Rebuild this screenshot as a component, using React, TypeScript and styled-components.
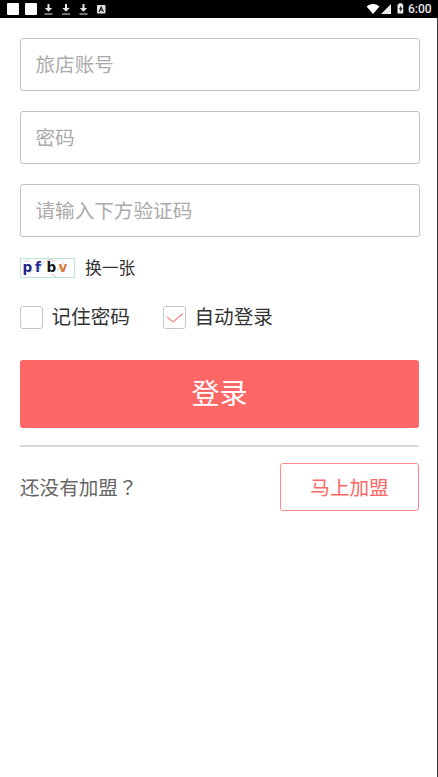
import React, { useState } from "react";
import styled, { createGlobalStyle } from "styled-components";

const GlobalStyle = createGlobalStyle`
  * { box-sizing: border-box; }
  body {
    margin: 0;
    background: #fff;
    font-family: "Noto Sans CJK SC", sans-serif;
  }
  button, input { font-family: inherit; }
`;

const Screen = styled.div`
  height: 777px;
  display: flex;
  flex-direction: column;
  overflow: hidden;
`;

const StatusBar = styled.header`
  flex: none;
  height: 18px;
  background: #000;
  display: flex;
  justify-content: space-between;
`;

const StatusIcons = styled.svg`
  display: block;
`;

const StatusRight = styled.div`
  display: flex;
`;

const Clock = styled.span`
  width: 30px;
  font: 500 12px/19px Roboto, sans-serif;
  color: #e8e8e8;
  white-space: nowrap;
`;

const Content = styled.main`
  flex: 1;
  border-right: 1px solid #33383d;
  padding: 20px 17px 0 20px;
  display: flex;
  flex-direction: column;
`;

const Field = styled.input<{ $gap: number }>`
  flex: none;
  width: 400px;
  height: 53px;
  margin: 0 0 ${(p) => p.$gap}px;
  padding: 0 14.5px 2px;
  border: 1px solid #c2c2c2;
  border-radius: 3px;
  outline: none;
  background: #fff;
  color: #333;
  font-size: 19.6px;
  &::placeholder { color: #aaa; opacity: 1; }
`;

const CaptchaRow = styled.div`
  display: flex;
  align-items: center;
  height: 20px;
  margin-top: 20px;
`;

const CaptchaImage = styled.svg`
  display: block;
`;

const Refresh = styled.span`
  margin-left: 10px;
  padding-bottom: 2px;
  font-size: 16.8px;
  line-height: 20px;
  color: #333;
`;

const Options = styled.div`
  display: flex;
  align-items: center;
  height: 24px;
  margin-top: 27px;
`;

const Option = styled.label<{ $width: number }>`
  display: flex;
  align-items: center;
  width: ${(p) => p.$width}px;
  color: #333;
  white-space: nowrap;
`;

const OptionLabel = styled.span`
  padding-bottom: 2px;
  font-size: 19.6px;
  line-height: 22px;
`;

const Box = styled.span`
  flex: none;
  width: 23px;
  height: 23px;
  margin: 1px 8.5px 0 0;
  border: 1px solid #c6c6c6;
  border-radius: 3px;
  display: flex;
  align-items: center;
  justify-content: center;
`;

const LoginButton = styled.button`
  flex: none;
  height: 68px;
  width: 399px;
  margin: 31px 0 0;
  padding: 0 0 4px;
  border: 0;
  border-radius: 3px;
  background: #ff6666;
  color: #fff;
  font-size: 28px;
`;

const Divider = styled.hr`
  flex: none;
  width: 399px;
  height: 2px;
  margin: 17px 0 0;
  border: 0;
  background: #d8d8d8;
`;

const JoinRow = styled.div`
  width: 399px;
  height: 48px;
  margin-top: 16px;
  display: flex;
  align-items: center;
  justify-content: space-between;
`;

const JoinText = styled.span`
  font-size: 19.6px;
  line-height: 28px;
  color: #666;
`;

const CenteredMark = styled.span`
  font-family: "Noto Sans CJK TC", sans-serif;
`;

const JoinButton = styled.button`
  width: 139px;
  height: 48px;
  padding: 0 0 2px;
  border: 1px solid #ff8a8a;
  border-radius: 3px;
  background: #fff;
  color: #ff6666;
  font-size: 19.6px;
`;

function Notifications() {
  return (
    <StatusIcons width="120" height="18" viewBox="0 0 120 18">
      <rect x="7" y="3" width="12" height="12" rx="1" fill="#fff" />
      <rect x="25" y="3" width="12" height="12" rx="1" fill="#fff" />
      {[48.5, 66, 83.5].map((x) => (
        <g key={x} transform={`translate(${x} 0)`} fill="#e4e4e4">
          <path d="M-1 4h2v4h2.7L0 11.7-3.7 8H-1z" />
          <rect x="-4" y="13.5" width="8" height="1" />
        </g>
      ))}
      <rect x="97" y="5" width="8.5" height="8.5" rx="1" fill="#e4e4e4" />
      <path d="M99 12l2.2-5 2.2 5M99.8 10.2h2.8" fill="none" stroke="#111" strokeWidth="1.1" />
    </StatusIcons>
  );
}

function SystemIcons() {
  return (
    <StatusIcons width="42" height="18" viewBox="0 0 42 18">
      <path d="M0.5 6.4Q7 1.8 13.5 6.4L7 14z" fill="#fff" />
      <path d="M25 4v10H15z" fill="#eee" />
      <path d="M33 3.2h3v1.1h1.2V13.5h-5.7V4.3H33z" fill="#eee" />
      <path d="M35.2 5.5l-2.3 3.7h1.4v2.8l2.2-3.7h-1.3z" fill="#111" />
    </StatusIcons>
  );
}

function Captcha() {
  return (
    <CaptchaImage width="55" height="20" viewBox="0 0 55 20">
      <rect x=".5" y=".5" width="54" height="19" fill="#fdfefe" stroke="#bce4d8" />
      <g fill="none" strokeWidth=".8">
        <path d="M4 4q3-3 6 0M18 12l6-8" stroke="#d9b6df" />
        <path d="M27 3q4-3 8 1M31 16q3 1 5 3" stroke="#e5a3a8" />
        <path d="M37 13l7-9" stroke="#e5b08c" />
        <path d="M8 16l5-4" stroke="#dfc49c" />
      </g>
      <g fontFamily="DejaVu Sans, sans-serif" fontWeight="700" fontSize="13.5">
        <text x="2.5" y="14" fill="#25258c">p</text>
        <text x="15" y="14" fill="#1f2c9c">f</text>
        <text x="26.5" y="14" fill="#171717">b</text>
        <text x="38.5" y="14" fill="#d87a40">v</text>
      </g>
    </CaptchaImage>
  );
}

function CheckOption(props: { label: string; width: number; initial: boolean }) {
  const [checked, setChecked] = useState(props.initial);
  return (
    <Option $width={props.width} onClick={() => setChecked(!checked)}>
      <Box role="checkbox" aria-checked={checked}>
        {checked && (
          <svg width="18" height="12" viewBox="0 0 18 12">
            <path d="M1 5l6 5L17 1.5" fill="none" stroke="#f58a8a" strokeWidth="1.2" />
          </svg>
        )}
      </Box>
      <OptionLabel>{props.label}</OptionLabel>
    </Option>
  );
}

export default function App() {
  return (
    <>
      <GlobalStyle />
      <Screen>
        <StatusBar>
          <Notifications />
          <StatusRight>
            <SystemIcons />
            <Clock>6:00</Clock>
          </StatusRight>
        </StatusBar>
        <Content>
          <Field $gap={20} placeholder="旅店账号" />
          <Field $gap={20} placeholder="密码" type="password" />
          <Field $gap={1} placeholder="请输入下方验证码" />
          <CaptchaRow>
            <Captcha />
            <Refresh>换一张</Refresh>
          </CaptchaRow>
          <Options>
            <CheckOption label="记住密码" width={143} initial={false} />
            <CheckOption label="自动登录" width={120} initial />
          </Options>
          <LoginButton>登录</LoginButton>
          <Divider />
          <JoinRow>
            <JoinText>
              还没有加盟<CenteredMark lang="zh-TW">？</CenteredMark>
            </JoinText>
            <JoinButton>马上加盟</JoinButton>
          </JoinRow>
        </Content>
      </Screen>
    </>
  );
}
